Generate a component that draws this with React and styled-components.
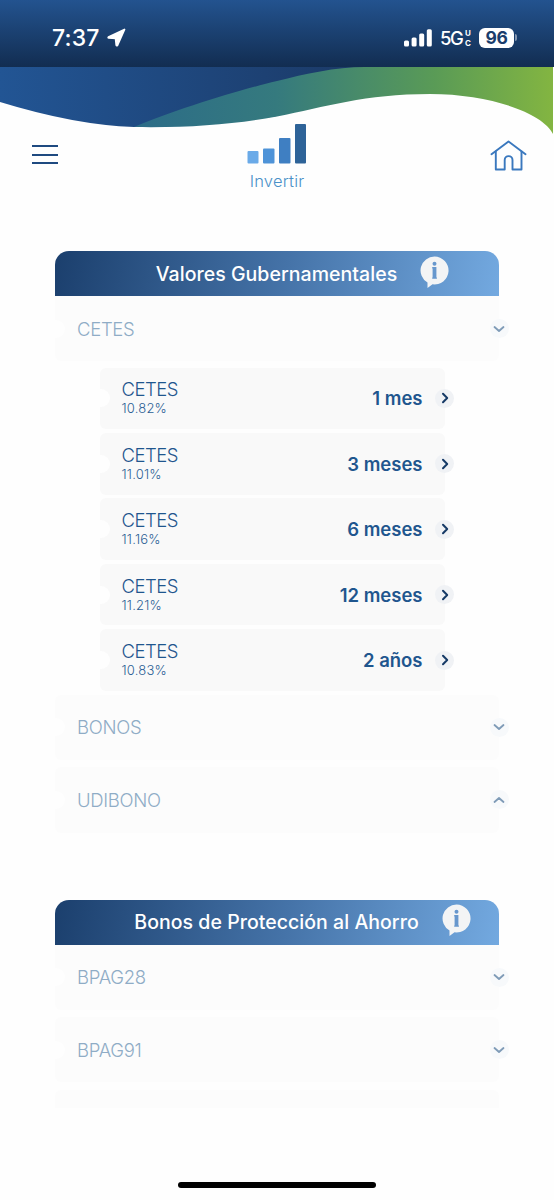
import React from "react";
import styled, { createGlobalStyle } from "styled-components";

const GlobalStyle = createGlobalStyle`
  * { box-sizing: border-box; }
  body { margin: 0; background: #fefefe; font-family: Inter, "Liberation Sans", sans-serif; }
`;

const Screen = styled.div`
  width: 554px;
  height: 1200px;
  display: flex;
  flex-direction: column;
  overflow: hidden;
  background: #fefefe;
`;

const StatusBar = styled.div`
  height: 67px;
  flex: none;
  display: flex;
  align-items: center;
  justify-content: space-between;
  padding: 8px 37px 0 52px;
  color: #fff;
  background: linear-gradient(#23538f, #122d51);
`;

const StatusGroup = styled.div`
  display: flex;
  align-items: center;
`;

const Clock = styled.span`
  font-size: 23px;
  font-weight: 500;
  letter-spacing: 0.2px;
  margin-right: 7px;
`;

const Network = styled.span`
  font-size: 18.5px;
  font-weight: 500;
  line-height: 20px;
  letter-spacing: -1.3px;
  margin: 0 2.5px 0 8px;
`;

const NetworkBand = styled.span`
  display: flex;
  flex-direction: column;
  font-size: 8px;
  font-weight: 700;
  line-height: 10px;
  margin-right: 8px;
`;

const Battery = styled.span`
  width: 35px;
  height: 20px;
  border-radius: 6px;
  background: #fff;
  color: #1a3d6c;
  font-size: 17.5px;
  font-weight: 700;
  line-height: 20px;
  text-align: center;
  letter-spacing: -0.4px;
`;

const BatteryTip = styled.span`
  width: 2px;
  height: 7px;
  margin-left: 1px;
  border-radius: 0 3px 3px 0;
  background: #8496b0;
`;

const Wave = styled.svg`
  display: block;
  flex: none;
  width: 554px;
  height: 67px;
`;

const NavBar = styled.nav`
  height: 66px;
  flex: none;
  margin-top: -10px;
  padding: 0 27px 0 32px;
  display: grid;
  grid-template-columns: 1fr auto 1fr;
  align-items: start;
`;

const MenuButton = styled.button`
  width: 26px;
  height: 19px;
  margin-top: 21px;
  padding: 0;
  border: 0;
  background: none;
  display: flex;
  flex-direction: column;
  justify-content: space-between;
`;

const MenuLine = styled.span`
  width: 100%;
  height: 2px;
  background: #1e4a80;
`;

const HomeButton = styled.button`
  justify-self: end;
  margin-top: 16px;
  padding: 0;
  border: 0;
  background: none;
  line-height: 0;
`;

const Brand = styled.div`
  display: flex;
  flex-direction: column;
  align-items: center;
  margin-left: -5px;
`;

const BrandName = styled.span`
  margin-top: 5px;
  font-size: 16.5px;
  font-weight: 300;
  line-height: 22px;
  letter-spacing: 0.2px;
  color: #4a90c8;
`;

const Content = styled.main`
  height: 857px;
  flex: none;
  margin-top: 61px;
  padding: 0 55px;
  overflow: hidden;
`;

const Section = styled.section`
  margin-bottom: 67px;
`;

const SectionHeader = styled.header`
  height: 45px;
  padding-left: 51px;
  display: flex;
  align-items: center;
  justify-content: center;
  gap: 23px;
  border-radius: 14px 14px 0 0;
  background: linear-gradient(100deg, #1b3f6d, #4573a8 52%, #73a9e0);
`;

const SectionTitle = styled.h2`
  margin: 0;
  color: #fff;
  font-size: 19.5px;
  font-weight: 450;
  line-height: 24px;
  letter-spacing: 0.04px;
  white-space: nowrap;
`;

const InfoIcon = styled.svg`
  width: 29px;
  height: 33px;
  flex: none;
  margin-top: -3px;
`;

const Rows = styled.div`
  display: flex;
  flex-direction: column;
  gap: 7.2px;
`;

const Card = styled.div`
  position: relative;
  display: flex;
  align-items: center;
  justify-content: space-between;
  padding: 0 22px;
  color: #1f568e;

  &::before {
    content: "";
    position: absolute;
    left: -8px;
    top: calc(50% - 9px);
    width: 18px;
    height: 18px;
    border-radius: 50%;
    background: #fefefe;
  }
`;

const GroupRow = styled(Card)`
  height: 65.3px;
  border-radius: ${(p) => (p.$first ? "0 0 6px 6px" : "6px")};
  background: #fcfcfc;
`;

const GroupName = styled.span`
  font-size: 18.5px;
  font-weight: 300;
  line-height: 24px;
  letter-spacing: -0.3px;
  color: #8facc6;
`;

const Terms = styled.div`
  display: flex;
  flex-direction: column;
  gap: 3.9px;
  margin: -0.8px 54.5px -3.2px 44.5px;
`;

const TermRow = styled(Card)`
  height: 61.5px;
  border-radius: 6px;
  background: #f9f9f9;
`;

const Instrument = styled.div`
  display: flex;
  flex-direction: column;
`;

const InstrumentName = styled.span`
  font-size: 18.5px;
  font-weight: 300;
  line-height: 20px;
  letter-spacing: -0.5px;
  color: #1f568e;
`;

const Rate = styled.span`
  font-size: 13px;
  font-weight: 300;
  line-height: 18px;
  letter-spacing: 0.2px;
  color: #2c5f95;
`;

const Term = styled.span`
  font-size: 18.5px;
  font-weight: 600;
  line-height: 22px;
`;

const Knob = styled.span`
  position: absolute;
  right: -9.5px;
  top: calc(50% - 9.5px);
  width: 19px;
  height: 19px;
  border-radius: 50%;
  display: flex;
  align-items: center;
  justify-content: center;
  background: ${(p) => (p.$soft ? "#f7f9fb" : "#f0f2f5")};
  color: ${(p) => (p.$soft ? "#7f9bb7" : "#163a66")};
`;

const HomeIndicator = styled.div`
  width: 198px;
  height: 6px;
  flex: none;
  align-self: center;
  margin-top: 74px;
  border-radius: 3px;
  background: #000;
`;

const chevrons = {
  down: "M1.5 4 L6 8 L10.5 4",
  up: "M1.5 8 L6 4 L10.5 8",
  right: "M4 1.8 L8.2 6 L4 10.2",
};

function Chevron({ direction, soft }) {
  return (
    <Knob $soft={soft}>
      <svg width="12" height="12" viewBox="0 0 12 12" fill="none" stroke="currentColor"
        strokeWidth={soft ? 1.8 : 2} strokeLinecap="round" strokeLinejoin="round">
        <path d={chevrons[direction]} />
      </svg>
    </Knob>
  );
}

function Info() {
  return (
    <InfoIcon viewBox="0 0 29 33">
      <path fill="#f3f4f5" d="M14.500 .5 a14 14 0 1 1 -2 27.850 L7.500 32 V26.600 A14 14 0 0 1 14.500 .5Z" />
      <circle cx="14.500" cy="7.800" r="2" fill="#6797cd" />
      <path fill="#6797cd" d="M12.200 11 h4.200 v10.400 h.5 v1.400 h-4.700 v-1.400 h.4 v-9 h-.4z" />
    </InfoIcon>
  );
}

function Group({ name, first, open }) {
  return (
    <GroupRow $first={first}>
      <GroupName>{name}</GroupName>
      <Chevron soft direction={open ? "up" : "down"} />
    </GroupRow>
  );
}

function Header({ title }) {
  return (
    <SectionHeader>
      <SectionTitle>{title}</SectionTitle>
      <Info />
    </SectionHeader>
  );
}

const cetes = [
  { rate: "10.82%", term: "1 mes" },
  { rate: "11.01%", term: "3 meses" },
  { rate: "11.16%", term: "6 meses" },
  { rate: "11.21%", term: "12 meses" },
  { rate: "10.83%", term: "2 años" },
];

export default function App() {
  return (
    <Screen>
      <GlobalStyle />
      <StatusBar>
        <StatusGroup>
          <Clock>7:37</Clock>
          <svg width="19" height="19" viewBox="0 0 19 19">
            <path fill="#fff" stroke="#fff" strokeWidth="1.8" strokeLinejoin="round"
              d="M17.500 1.500 L1.500 9 Q.9 9.700 1.700 9.900 L8.600 10.400 L9.300 17.200 Q9.700 18 10.400 17.300Z" />
          </svg>
        </StatusGroup>
        <StatusGroup>
          <svg width="28" height="18" viewBox="0 0 28 18" fill="#fff">
            <rect x="0" y="11.5" width="5" height="6" rx="1.5" />
            <rect x="7.6" y="8.5" width="5" height="9" rx="1.5" />
            <rect x="15.2" y="4.5" width="5" height="13" rx="1.5" />
            <rect x="22.8" y="0.3" width="5" height="17.2" rx="1.5" />
          </svg>
          <Network>5G</Network>
          <NetworkBand>
            <span>U</span>
            <span>C</span>
          </NetworkBand>
          <Battery>96</Battery>
          <BatteryTip />
        </StatusGroup>
      </StatusBar>

      <Wave viewBox="0 67 554 67">
        <defs>
          <linearGradient id="navy">
            <stop offset="0" stopColor="#225594" />
            <stop offset="1" stopColor="#1b3966" />
          </linearGradient>
          <linearGradient id="lime">
            <stop offset="0" stopColor="#2c6c88" />
            <stop offset=".34" stopColor="#357a7e" />
            <stop offset=".72" stopColor="#5a9b56" />
            <stop offset="1" stopColor="#83b541" />
          </linearGradient>
        </defs>
        <path fill="url(#navy)" d="M0 67 H370 L277 116 Q205 127 134 127 Q75 125 0 102Z" />
        <path fill="url(#lime)"
          d="M134 127 C175 110 235 91 277 81 C305 74 335 67 365 67 H553 V134 C543 113 490 94 430 94 C365 94 325 107 277 116.500 C235 124 190 128 134 127Z" />
      </Wave>

      <NavBar>
        <MenuButton aria-label="Menú">
          <MenuLine />
          <MenuLine />
          <MenuLine />
        </MenuButton>
        <Brand>
          <svg width="60" height="41" viewBox="0 0 60 41">
            <rect x="0.500" y="27" width="11" height="12.500" rx="1" fill="#6aaae8" />
            <rect x="16" y="24.500" width="11.500" height="15" rx="1" fill="#4e93d8" />
            <rect x="32" y="14" width="11.500" height="25.500" rx="1" fill="#3f7fc2" />
            <rect x="48" y="0" width="11" height="39.500" rx="1" fill="#2e6398" />
          </svg>
          <BrandName>Invertir</BrandName>
        </Brand>
        <HomeButton aria-label="Inicio">
          <svg width="37" height="32" viewBox="0 0 37 32" fill="none" stroke="#3a78be"
            strokeWidth="1.9" strokeLinejoin="round" strokeLinecap="round">
            <path d="M1.500 14.300 L18.500 1.500 L35.500 14.300" />
            <path d="M5.800 11.500 V29.500 H14.700 V20 A3.900 3.900 0 0 1 22.500 20 V29.500 H31.500 V11.500" />
          </svg>
        </HomeButton>
      </NavBar>

      <Content>
        <Section>
          <Header title="Valores Gubernamentales" />
          <Rows>
            <Group name="CETES" first />
            <Terms>
              {cetes.map((c) => (
                <TermRow key={c.term}>
                  <Instrument>
                    <InstrumentName>CETES</InstrumentName>
                    <Rate>{c.rate}</Rate>
                  </Instrument>
                  <Term>{c.term}</Term>
                  <Chevron direction="right" />
                </TermRow>
              ))}
            </Terms>
            <Group name="BONOS" />
            <Group name="UDIBONO" open />
          </Rows>
        </Section>
        <Section>
          <Header title="Bonos de Protección al Ahorro" />
          <Rows>
            <Group name="BPAG28" first />
            <Group name="BPAG91" />
            <GroupRow />
          </Rows>
        </Section>
      </Content>
      <HomeIndicator />
    </Screen>
  );
}
